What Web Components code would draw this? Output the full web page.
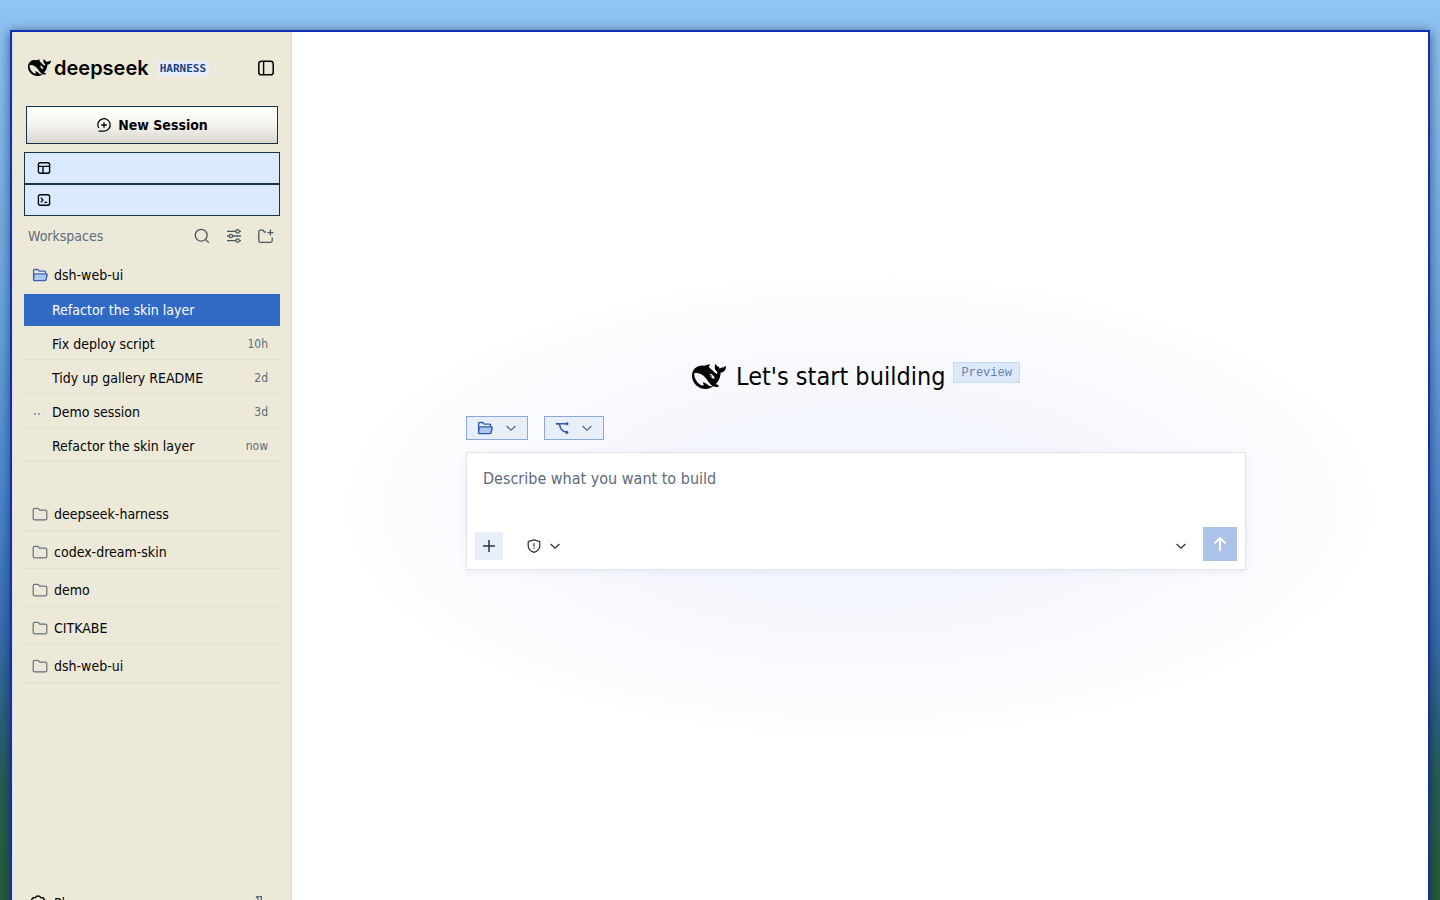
<!DOCTYPE html>
<html lang="en">
<head>
<meta charset="utf-8">
<title>DeepSeek Harness</title>
<style>
html, body { margin: 0; height: 100%; overflow: hidden; }
body {
  --ink: #050505;
  --muted: #5d6b7c;
  --navy: #123650;
  --accent: #316ac5;
  --sand: #ece9d8;
  font: 14px/20px "DejaVu Sans Condensed", Tahoma, sans-serif;
  color: var(--ink);
  background: linear-gradient(#8fc4f5 0%, #8abef1 8%, #6fa8e4 33%, #4f88d0 55%, #3a6fb5 70%, #2c617f 80%, #285f58 87%, #28603f 97%);
}
</style>
</head>
<body>
<app-window>
  <side-bar slot="side">
    <nav-row icon="layout" label="Board"></nav-row>
    <nav-row icon="terminal" label="Terminal"></nav-row>
    <work-space slot="tree" name="dsh-web-ui" open>
      <session-row name="Refactor the skin layer" selected></session-row>
      <session-row name="Fix deploy script" time="10h"></session-row>
      <session-row name="Tidy up gallery README" time="2d"></session-row>
      <session-row name="Demo session" time="3d" busy></session-row>
      <session-row name="Refactor the skin layer" time="now"></session-row>
    </work-space>
    <work-space slot="tree" name="deepseek-harness"></work-space>
    <work-space slot="tree" name="codex-dream-skin"></work-space>
    <work-space slot="tree" name="demo"></work-space>
    <work-space slot="tree" name="CITKABE"></work-space>
    <work-space slot="tree" name="dsh-web-ui"></work-space>
  </side-bar>
  <start-page>
    <chip-button slot="chips" icon="folderOpen" size="16" label="Workspace"></chip-button>
    <chip-button slot="chips" icon="branch" size="14" label="Branch"></chip-button>
    <prompt-box></prompt-box>
  </start-page>
</app-window>

<script>
const RESET = `
  *, *::before { box-sizing: border-box; }
  button { font: inherit; color: inherit; margin: 0; padding: 0; border: 0; background: none; border-radius: 0; cursor: pointer; }
`;

const ICONS = {
  whale: ['0 3 24 18', '<path fill="currentColor" stroke="none" d="M23.748 4.482c-.254-.124-.364.113-.512.234-.051.039-.094.09-.137.136-.372.397-.806.657-1.373.626-.829-.046-1.537.214-2.163.848-.133-.782-.575-1.248-1.247-1.548-.352-.156-.708-.311-.955-.65-.172-.241-.219-.51-.305-.774-.055-.16-.11-.323-.293-.35-.2-.031-.278.136-.356.276-.313.572-.434 1.202-.422 1.84.027 1.436.633 2.58 1.838 3.393.137.093.172.187.129.323-.082.28-.18.552-.266.833-.055.179-.137.217-.329.14a5.526 5.526 0 01-1.736-1.18c-.857-.828-1.631-1.742-2.597-2.458a11.365 11.365 0 00-.689-.471c-.985-.957.13-1.743.388-1.836.27-.098.093-.432-.779-.428-.872.004-1.67.295-2.687.684a3.055 3.055 0 01-.465.137 9.597 9.597 0 00-2.883-.102c-1.885.21-3.39 1.102-4.497 2.623C.082 8.606-.231 10.684.152 12.85c.403 2.284 1.569 4.175 3.36 5.653 1.858 1.533 3.997 2.284 6.438 2.14 1.482-.085 3.133-.284 4.994-1.86.47.234.962.327 1.78.397.63.059 1.236-.03 1.705-.128.735-.156.684-.837.419-.961-2.155-1.004-1.682-.595-2.113-.926 1.096-1.296 2.746-2.642 3.392-7.003.05-.347.007-.565 0-.845-.004-.17.035-.237.23-.256a4.173 4.173 0 001.545-.475c1.396-.763 1.96-2.015 2.093-3.517.02-.23-.004-.467-.247-.588zM11.581 18c-2.089-1.642-3.102-2.183-3.52-2.16-.392.024-.321.471-.235.763.09.288.207.486.371.739.114.167.192.416-.113.603-.673.416-1.842-.14-1.897-.167-1.361-.802-2.5-1.86-3.301-3.307-.774-1.393-1.224-2.887-1.298-4.482-.02-.386.093-.522.477-.592a4.696 4.696 0 011.529-.039c2.132.312 3.946 1.265 5.468 2.774.868.86 1.525 1.887 2.202 2.891.72 1.066 1.494 2.082 2.48 2.914.348.292.625.514.891.677-.802.09-2.14.11-3.054-.614zm1-6.44a.306.306 0 01.415-.287.302.302 0 01.2.288.306.306 0 01-.31.307.303.303 0 01-.304-.308zm3.11 1.596c-.2.081-.399.151-.59.16a1.245 1.245 0 01-.798-.254c-.274-.23-.47-.358-.552-.758a1.73 1.73 0 01.016-.588c.07-.327-.008-.537-.239-.727-.187-.156-.426-.199-.688-.199a.559.559 0 01-.254-.078c-.11-.054-.2-.19-.114-.358.028-.054.16-.186.192-.21.356-.202.767-.136 1.146.016.352.144.618.408 1.001.782.391.451.462.576.685.914.176.265.336.537.445.848.067.195-.019.354-.25.452z"/>'],
  panel: ['0 0 16 16', '<rect x=".8" y="1.2" width="14.4" height="13.6" rx="2.6" stroke-width="1.5"/><path d="M5.6 1.5v13" stroke-width="1.4"/>'],
  newChat: ['0 0 16 16', '<path d="M2.600 14.100h5.400a6.200 6.200 0 1 0-5.400-3.100" stroke-width="1.3"/><path d="M8 5.200v5.600M5.200 8h5.600" stroke-width="1.3"/>'],
  layout: ['0 0 14 14', '<rect x="1.4" y="1.8" width="11.2" height="10.4" rx="1.8" stroke-width="1.4"/><path d="M1.5 5.4h11M6 5.4v6.6" stroke-width="1.4"/>'],
  terminal: ['0 0 14 14', '<rect x="1.4" y="1.8" width="11.2" height="10.4" rx="1.8" stroke-width="1.4"/><path d="M3.8 4.8 6 7 3.8 9.2M7.4 9.4h2.8" stroke-width="1.3"/>'],
  search: ['0 0 16 16', '<circle cx="7.2" cy="7.2" r="5.9" stroke-width="1.3"/><path d="m11.6 11.6 3.2 3.2" stroke-width="1.3"/>'],
  sliders: ['0 0 16 16', '<path d="M1 3.4h8.8M13.4 3.4H15M1 8h2M6.8 8H15M1 12.6h8.8M13.4 12.6H15" stroke-width="1.3"/><circle cx="11.6" cy="3.4" r="1.7" stroke-width="1.2"/><circle cx="4.9" cy="8" r="1.7" stroke-width="1.2"/><circle cx="11.6" cy="12.6" r="1.7" stroke-width="1.2"/>'],
  folderPlus: ['0 0 16 16', '<path d="M7.8 4H6.3L5 2.2H2.2c-.8 0-1.4.6-1.4 1.4v9.2c0 .9.6 1.5 1.4 1.5h10.6c.8 0 1.4-.6 1.4-1.5V9.6" stroke-width="1.3"/><path d="M12.4 1.6v6M9.4 4.6h6" stroke-width="1.3"/>'],
  folder: ['0 0 16 16', '<path d="M1.2 3.8c0-.8.5-1.4 1.3-1.4h3.1c.4 0 .7.2 1 .5l1 1.2h5.8c.8 0 1.4.6 1.4 1.4v6.9c0 .8-.6 1.4-1.4 1.4H2.6c-.8 0-1.4-.6-1.4-1.4z" stroke-width="1.2"/>'],
  folderOpen: ['0 0 16 16', '<path d="M1.6 12.6V3.7c0-.7.5-1.2 1.2-1.2h2.9l1.5 1.6h5.2c.7 0 1.2.5 1.2 1.2v1.6" stroke-width="1.4"/><path d="M3 6.9h11.2c.7 0 1 .5.9 1.1l-1 4.6c-.1.6-.6 1-1.2 1H2.6c-.7 0-1.1-.5-1-1.1l.5-4.7c0-.5.4-.9.9-.9z" fill="#a9c8f0" stroke-width="1.4"/>'],
  branch: ['0 0 14 14', '<path d="M1 2.8h11.6M4.4 2.8c.6 4.6 2.2 7.2 6.4 8.2" stroke-width="1.5"/><circle cx="12" cy="2.8" r="1.2" fill="currentColor" stroke-width=".6"/><circle cx="11.8" cy="11.4" r="1.3" fill="currentColor" stroke-width=".6"/><path d="m.8 2.3 2.4 1.2" stroke-width="1.2"/>'],
  chevron: ['0 0 12 12', '<path d="M1.6 4 6 8.2 10.4 4" stroke-width="1.3"/>'],
  plus: ['0 0 14 14', '<path d="M7 1v12M1 7h12" stroke-width="1.5"/>'],
  shield: ['0 0 16 16', '<path d="M8 1 14.6 3v5c0 3.4-2.6 5.8-6.6 7.2C4 13.8 1.4 11.4 1.4 8V3z" stroke-width="1.4" stroke-linejoin="round"/><path d="M8 4.8v3.8M8 9.8v1.4" stroke-width="1.4"/>'],
  arrowUp: ['0 0 16 16', '<path d="M8 15V2M2.4 7.4 8 1.8l5.6 5.6" stroke-width="2"/>'],
  plan: ['0 0 16 16', '<path d="M5.4 2.6C6 .6 10 .6 10.600 2.600l2.800.4 1.600 3-1 2.400 1 2.600-1.800 2.800H2.800L1 11l1-2.600L1 6l1.600-3z" stroke-width="1.5" stroke-linejoin="round"/>'],
  phone: ['0 0 12 16', '<path d="M2.600 3V1.600h4.800V14.400H3.800V1.600" stroke-width="1.3"/>']
};

class Base extends HTMLElement {
  connectedCallback() {
    if (this.shadowRoot) return;
    this.attachShadow({ mode: 'open' }).innerHTML = `<style>${RESET}</style>` + this.render();
  }
  attr(name) { return this.getAttribute(name) || ''; }
}

customElements.define('ui-icon', class extends Base {
  render() {
    const [box, body] = ICONS[this.attr('name')];
    const w = this.attr('size') || '16';
    return `<style>:host { display: block; flex: none; } svg { display: block; width: ${w}px; height: auto; }</style>
      <svg viewBox="${box}" fill="none" stroke="currentColor" aria-hidden="true">${body}</svg>`;
  }
});

customElements.define('app-window', class extends Base {
  render() {
    return `<style>
      :host { display: flex; box-sizing: border-box; height: 100vh; margin: 30px 10px 0; border: 2px solid #1330ab; background: #fff;
        box-shadow: 0 2px 12px rgba(0, 20, 40, .6); }
      ::slotted(side-bar) { flex: 0 0 280px; }
      ::slotted(start-page) { flex: 1; min-width: 0; }
    </style><slot name="side"></slot><slot></slot>`;
  }
});

customElements.define('side-bar', class extends Base {
  render() {
    return `<style>
      :host { display: flex; flex-direction: column; box-sizing: border-box; padding: 20px 11px 9px; background: var(--sand);
        border-left: 1px solid #d9e0f8; border-right: 1px solid #dfdccb; }
      header { display: flex; align-items: center; height: 32px; padding: 0 6px 0 4px; }
      .word { margin-left: 3px; font: 600 20px/24px Inter, sans-serif; }
      .tag { margin-left: 8px; padding: 1px 3px 0; border-radius: 2px; background: #e6eefc; color: #1d3f7c; font: 700 11px/14px "DejaVu Sans Mono", monospace; }
      .toggle { margin-left: auto; }
      .new { display: flex; align-items: center; justify-content: center; gap: 6px; height: 38px; margin: 22px 2px 8px;
        border: 1px solid var(--navy); background: linear-gradient(#fff, #f4f3ee 50%, #d9d6cb); font-weight: 700; }
      .bar { display: flex; align-items: center; gap: 16px; height: 40px; padding: 0 6px 0 4px; color: var(--muted); }
      .bar button { color: #4b5660; }
      h2 { flex: 1; margin: 0; font: inherit; }
      .tree { flex: 1; padding-top: 2px; }
      footer { display: flex; align-items: center; justify-content: space-between; height: 32px; padding: 0 14px 0 6px; }
      footer button { display: flex; align-items: center; gap: 8px; }
      footer .end { color: var(--muted); }
    </style>
    <header><ui-icon name="whale" size="23"></ui-icon><span class="word">deepseek</span><span class="tag">HARNESS</span>
      <button class="toggle" aria-label="Collapse sidebar"><ui-icon name="panel"></ui-icon></button></header>
    <button class="new"><ui-icon name="newChat"></ui-icon>New Session</button>
    <nav><slot></slot></nav>
    <div class="bar"><h2>Workspaces</h2>
      <button aria-label="Search"><ui-icon name="search"></ui-icon></button>
      <button aria-label="Filter"><ui-icon name="sliders"></ui-icon></button>
      <button aria-label="Add workspace"><ui-icon name="folderPlus"></ui-icon></button></div>
    <div class="tree"><slot name="tree"></slot></div>
    <footer><button><ui-icon name="plan"></ui-icon>Plans</button>
      <button class="end" aria-label="Devices"><ui-icon name="phone" size="12"></ui-icon></button></footer>`;
  }
});

customElements.define('nav-row', class extends Base {
  render() {
    return `<style>
      :host { display: block; }
      button { display: flex; align-items: center; width: 100%; height: 32px; padding: 0 12px; border: 1px solid var(--navy); background: #dbe9fd; }
    </style><button aria-label="${this.attr('label')}"><ui-icon name="${this.attr('icon')}" size="14"></ui-icon></button>`;
  }
});

customElements.define('work-space', class extends Base {
  render() {
    const open = this.hasAttribute('open');
    return `<style>
      :host { display: block; margin-bottom: 4px; }
      :host([open]) { margin-bottom: 35px; }
      .head { display: flex; align-items: center; gap: 6px; width: 100%; height: 34px; padding: 0 8px; border-bottom: 1px solid #e3e0cd; }
      ui-icon { color: ${open ? '#3b68ad' : '#66717c'}; }
      .rows { display: grid; gap: 2px; padding-top: ${open ? 2 : 0}px; }
    </style>
    <button class="head" aria-expanded="${open}"><ui-icon name="${open ? 'folderOpen' : 'folder'}"></ui-icon>${this.attr('name')}</button>
    <div class="rows"><slot></slot></div>`;
  }
});

customElements.define('session-row', class extends Base {
  render() {
    return `<style>
      :host { display: block; }
      button { display: flex; align-items: center; width: 100%; height: 32px; padding: 0 12px 0 10px; border-bottom: 1px solid #e3e0cd; text-align: left; }
      :host([selected]) button { background: var(--accent); border-color: var(--accent); color: #fff; }
      .state { display: flex; gap: 2px; width: 12px; height: 2px; margin: 4px 6px 0 0; }
      .state i { width: 2px; background: #8f9dc0; }
      .state i:last-child { background: #d3dbee; }
      .name { flex: 1; }
      time { color: var(--muted); font-size: 12px; }
    </style>
    <button><span class="state">${this.hasAttribute('busy') ? '<i></i><i></i><i></i>' : ''}</span><span class="name">${this.attr('name')}</span>${this.attr('time') ? `<time>${this.attr('time')}</time>` : ''}</button>`;
  }
});

customElements.define('start-page', class extends Base {
  render() {
    return `<style>
      :host { display: flex; flex-direction: column; justify-content: center; align-items: center; box-sizing: border-box; padding: 0 24px 28px 16px;
        background: radial-gradient(ellipse 46% 26% at 50% 53%, #f2f5fd 0%, #f5f7fd 45%, #fafbfe 75%, #fdfdff 94%, #fff 100%); }
      section { width: 100%; max-width: 780px; }
      .title { display: flex; justify-content: center; align-items: center; gap: 10px; height: 30px; margin-bottom: 24px; }
      h1 { margin: 0; font-size: 25px; line-height: 30px; font-weight: 400; white-space: nowrap; }
      .badge { align-self: flex-start; margin-left: -2px; padding: 1px 7px 0; border: 1px solid #c5daf3; background: #dce9fa; color: #6681ab;
        font: 12px/18px "Liberation Mono", monospace; }
      .chips { display: flex; gap: 16px; margin-bottom: 12px; }
    </style>
    <section>
      <div class="title"><ui-icon name="whale" size="34"></ui-icon><h1>Let's start building</h1><span class="badge">Preview</span></div>
      <div class="chips"><slot name="chips"></slot></div>
      <slot></slot>
    </section>`;
  }
});

customElements.define('chip-button', class extends Base {
  render() {
    return `<style>
      :host { display: block; }
      button { display: flex; align-items: center; gap: 12px; height: 24px; padding: 0 10px; border: 1px solid #8aa9d8; background: #e8effb; color: #2f5bab; }
      .arrow { color: #5a6b80; }
    </style><button aria-label="${this.attr('label')}"><ui-icon name="${this.attr('icon')}" size="${this.attr('size')}"></ui-icon><ui-icon class="arrow" name="chevron" size="12"></ui-icon></button>`;
  }
});

customElements.define('prompt-box', class extends Base {
  render() {
    return `<style>
      :host { display: block; box-sizing: border-box; padding: 8px; border: 1px solid #e2e4ea; background: #fff; box-shadow: 0 2px 8px rgba(40, 60, 120, .08); }
      textarea { display: block; width: 100%; height: 66px; padding: 6px 8px; border: 0; outline: 0; resize: none; background: none; color: inherit;
        font: 16px/24px "DejaVu Sans Condensed", Tahoma, sans-serif; }
      textarea::placeholder { color: var(--muted); opacity: 1; }
      .tools { display: flex; align-items: center; color: #2c3440; }
      .add, .mode, .model { margin-top: 4px; }
      .add { display: grid; place-items: center; width: 28px; height: 28px; margin-right: 24px; background: #e8effa; }
      .mode { display: flex; align-items: center; gap: 8px; }
      .model { margin-left: auto; margin-right: 16px; }
      .send { display: grid; place-items: center; width: 34px; height: 34px; background: #adc2e8; color: #fff; }
    </style>
    <textarea aria-label="Prompt" placeholder="Describe what you want to build"></textarea>
    <div class="tools">
      <button class="add" aria-label="Add"><ui-icon name="plus" size="14"></ui-icon></button>
      <button class="mode" aria-label="Permissions"><ui-icon name="shield" size="14"></ui-icon><ui-icon name="chevron" size="12"></ui-icon></button>
      <button class="model" aria-label="Model"><ui-icon name="chevron" size="12"></ui-icon></button>
      <button class="send" aria-label="Send"><ui-icon name="arrowUp" size="16"></ui-icon></button>
    </div>`;
  }
});
</script>
</body>
</html>
